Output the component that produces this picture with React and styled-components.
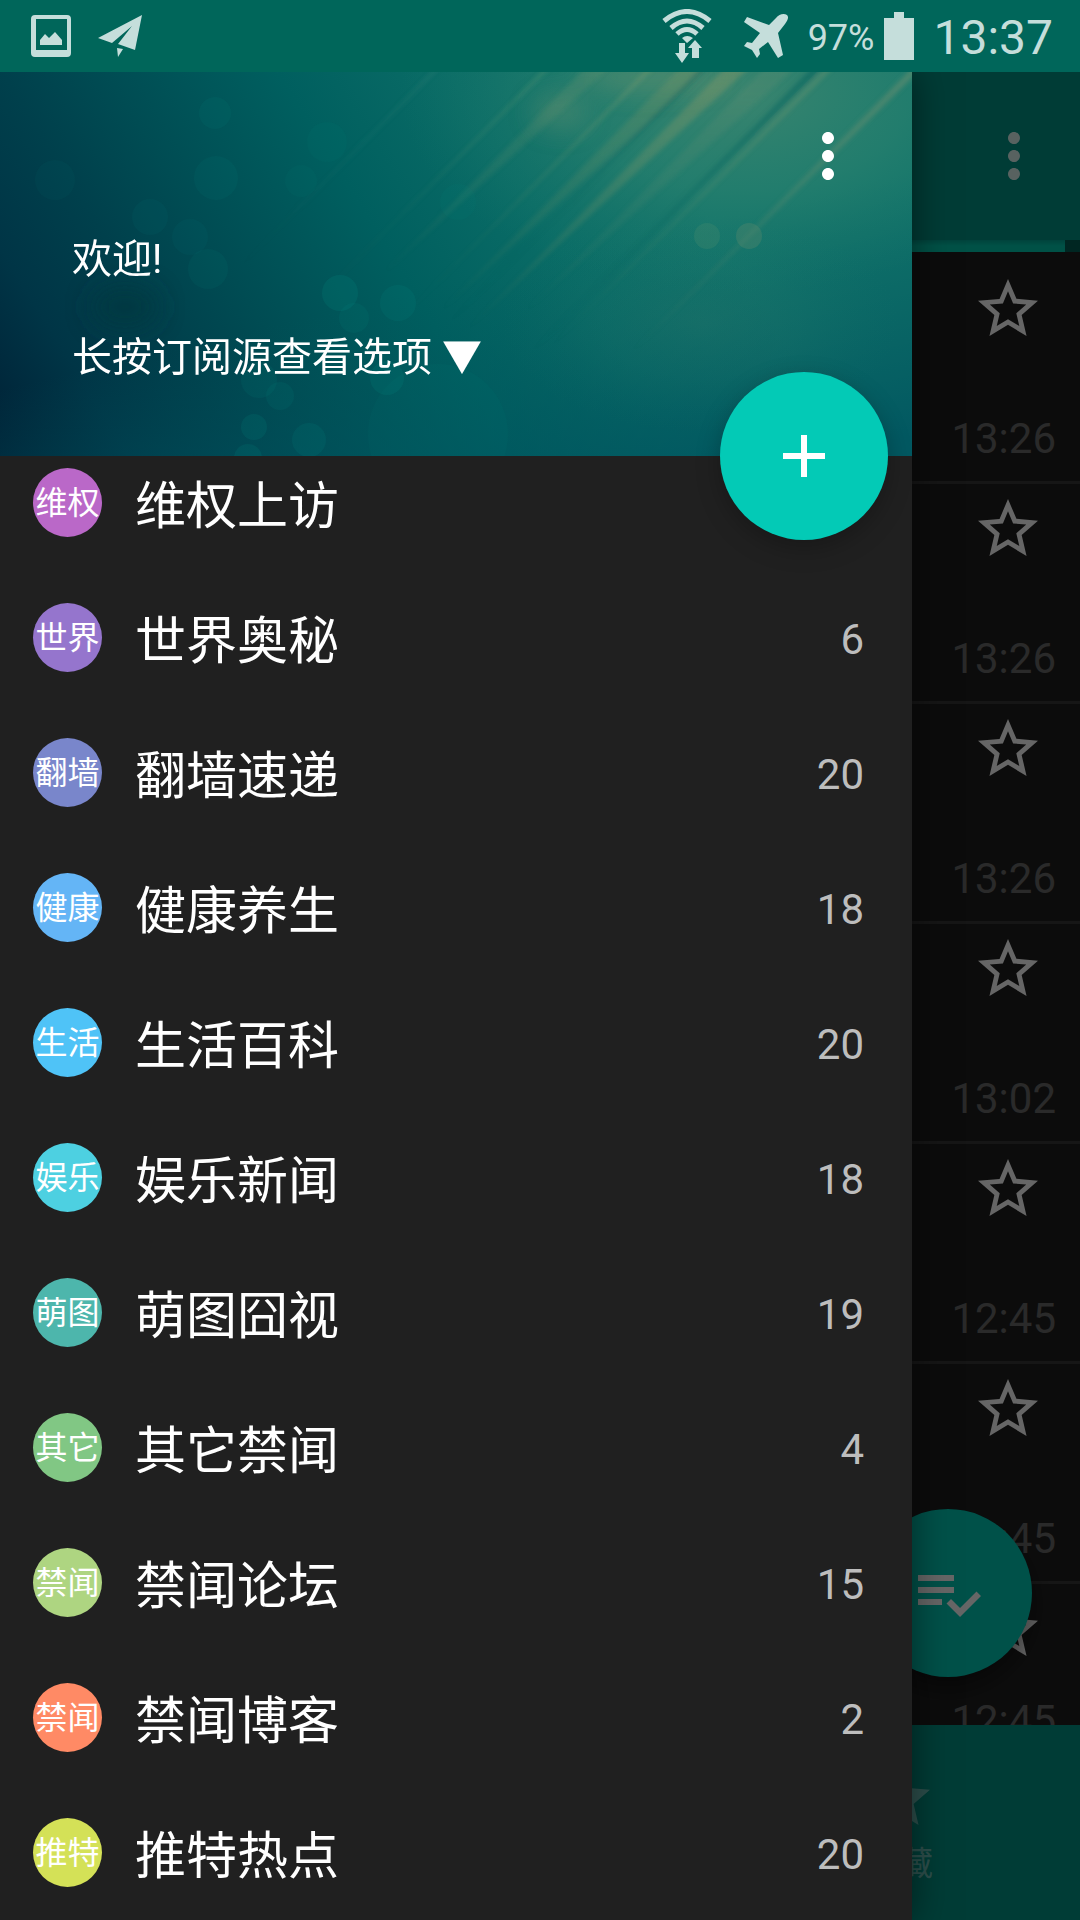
import React, { useState } from "react";
import styled, { createGlobalStyle } from "styled-components";

const feeds = [
  { short: "维权", name: "维权上访", color: "#ba68c8" },
  { short: "世界", name: "世界奥秘", count: 6, color: "#9575cd" },
  { short: "翻墙", name: "翻墙速递", count: 20, color: "#7986cb" },
  { short: "健康", name: "健康养生", count: 18, color: "#64b5f6" },
  { short: "生活", name: "生活百科", count: 20, color: "#4fc3f7" },
  { short: "娱乐", name: "娱乐新闻", count: 18, color: "#4dd0e1" },
  { short: "萌图", name: "萌图囧视", count: 19, color: "#4db6ac" },
  { short: "其它", name: "其它禁闻", count: 4, color: "#81c784" },
  { short: "禁闻", name: "禁闻论坛", count: 15, color: "#aed581" },
  { short: "禁闻", name: "禁闻博客", count: 2, color: "#ff8a65" },
  { short: "推特", name: "推特热点", count: 20, color: "#d4e157" },
];

const articles = [
  { id: 1, time: "13:26" },
  { id: 2, time: "13:26" },
  { id: 3, time: "13:26" },
  { id: 4, time: "13:02" },
  { id: 5, time: "12:45" },
  { id: 6, time: "12:45" },
  { id: 7, time: "12:45", compact: true },
];

const icons = {
  more: "M12 8c1.1 0 2-.9 2-2s-.9-2-2-2-2 .9-2 2 .9 2 2 2zm0 2c-1.1 0-2 .9-2 2s.9 2 2 2 2-.9 2-2-.9-2-2-2zm0 6c-1.1 0-2 .9-2 2s.9 2 2 2 2-.9 2-2-.9-2-2-2z",
  add: "M19 13h-6v6h-2v-6H5v-2h6V5h2v6h6v2z",
  star: "M12 17.27L18.18 21l-1.64-7.03L22 9.24l-7.19-.61L12 2 9.19 8.63 2 9.24l5.46 4.73L5.82 21z",
  starBorder:
    "M22 9.24l-7.19-.62L12 2 9.19 8.63 2 9.24l5.46 4.73L5.82 21 12 17.27 18.18 21l-1.63-7.03L22 9.24zM12 15.4l-3.76 2.27 1-4.28-3.32-2.88 4.38-.38L12 6.1l1.71 4.04 4.38.38-3.32 2.88 1 4.28L12 15.4z",
  markRead:
    "M14 10H2v2h12v-2zm0-4H2v2h12V6zM2 16h8v-2H2v2zm19.5-4.5L23 13l-6.99 7-4.51-4.5L13 14l3.01 3 5.49-5.5z",
};

const Icon = ({ name }) => (
  <StIcon viewBox="0 0 24 24" aria-hidden="true">
    <path d={icons[name]} />
  </StIcon>
);

const StatusBar = () => (
  <StStatusBar>
    <StStatusGroup $gap={27}>
      <svg width="40" height="42" viewBox="0 0 40 42">
        <path
          fillRule="evenodd"
          d="M4 0h32a4 4 0 0 1 4 4v34a4 4 0 0 1-4 4H4a4 4 0 0 1-4-4V4a4 4 0 0 1 4-4zM5 4v31h31V4zM9 30v-5l5-6 4 4 6-6 7 8v5z"
        />
      </svg>
      <svg width="45" height="42" viewBox="0 0 45 42">
        <path d="M0 23L44 0 14 28zM44 0L37 35 20 29 34 11 14 28 44 0zM19 33l6 1-5 8z" />
      </svg>
    </StStatusGroup>
    <StStatusGroup $gap={10}>
      <StWifi width="50" height="54" viewBox="0 0 50 54">
        <g fill="none" strokeWidth="5">
          <path d="M2 12Q25-7 48 12" />
          <path d="M9 19Q25 5 41 19" />
          <path d="M15 25Q25 16 35 25" />
        </g>
        <path d="M20 29Q25 25 31 29L25 34zM17 34h6v10h4l-7 10-7-10h4zM30 49V39h-4l7-8 7 8h-3v10z" />
      </StWifi>
      <StPlane width="44" height="44" viewBox="0 0 44 44">
        <path d="M43 1c-3-2-8-1-11 3l-7 7L3 3 0 8l16 11-8 10-5-1-3 4 8 4 5 8 3-4-1-5 9-7 10 16 5-3-5-22 7-9c3-4 4-7 2-9z" />
      </StPlane>
      <StBattery>97%</StBattery>
      <svg width="30" height="48" viewBox="0 0 30 48">
        <path d="M10 0h10v6h10v42H0V6h10z" />
      </svg>
      <StClock>13:37</StClock>
    </StStatusGroup>
  </StStatusBar>
);

const bokeh = [
  [215, 41, 16, 0.08],
  [216, 106, 22, 0.08],
  [150, 145, 18, 0.07],
  [55, 108, 20, 0.05],
  [190, 165, 18, 0.07],
  [208, 197, 20, 0.08],
  [327, 70, 20, 0.06],
  [301, 109, 16, 0.05],
  [340, 221, 18, 0.16],
  [354, 246, 15, 0.1],
  [398, 231, 18, 0.12],
  [259, 308, 18, 0.1],
  [280, 324, 14, 0.1],
  [387, 306, 17, 0.14],
  [254, 355, 13, 0.14],
  [309, 368, 17, 0.12],
  [248, 386, 14, 0.14],
  [438, 362, 70, 0.05],
  [458, 130, 18, 0.06],
];

// x at the top edge, length of the fall, thickness, colour
const rays = [
  [545, 230, 5, "#7fa878", 0.25],
  [585, 200, 24, "#6f9570", 0.25],
  [648, 260, 6, "#93a470", 0.28],
  [680, 240, 26, "#7f9568", 0.3],
  [725, 260, 24, "#8f9a68", 0.4],
  [765, 240, 30, "#5f9070", 0.3],
  [700, 260, 8, "#005f5c", 0.35],
  [812, 380, 10, "#00605c", 0.5],
  [826, 340, 7, "#7f9870", 0.35],
  [912, 400, 10, "#739272", 0.5],
  [435, 200, 5, "#4d9380", 0.2],
];

const HeaderArt = () => (
  <StArt viewBox="0 0 912 384" preserveAspectRatio="none" aria-hidden="true">
    <defs>
      <linearGradient id="sea" gradientUnits="userSpaceOnUse" x1="0" y1="384" x2="620" y2="0">
        <stop offset="0" stopColor="#002136" />
        <stop offset="0.15" stopColor="#003546" />
        <stop offset="0.28" stopColor="#00404c" />
        <stop offset="0.4" stopColor="#004c53" />
        <stop offset="0.6" stopColor="#005f5f" />
        <stop offset="0.8" stopColor="#0a6c66" />
        <stop offset="1" stopColor="#12746a" />
      </linearGradient>
      <radialGradient id="sun">
        <stop offset="0" stopColor="#559072" stopOpacity="0.6" />
        <stop offset="0.5" stopColor="#3a8a72" stopOpacity="0.4" />
        <stop offset="1" stopColor="#1d7c6d" stopOpacity="0" />
      </radialGradient>
      <linearGradient id="deep" gradientUnits="userSpaceOnUse" x1="700" y1="150" x2="760" y2="400">
        <stop offset="0" stopColor="#00585f" stopOpacity="0" />
        <stop offset="1" stopColor="#005560" stopOpacity="0.9" />
      </linearGradient>
      <linearGradient id="fade" x1="0" y1="0" x2="0" y2="1">
        <stop offset="0" stopColor="#fff" />
        <stop offset="1" stopColor="#000" />
      </linearGradient>
      <mask id="fall" maskUnits="userSpaceOnUse" x="0" y="0" width="912" height="384">
        <rect width="912" height="280" fill="url(#fade)" />
      </mask>
      <filter id="soft">
        <feGaussianBlur stdDeviation="2" />
      </filter>
      <filter id="softer" x="-50%" y="-50%" width="200%" height="200%">
        <feGaussianBlur stdDeviation="12" />
      </filter>
    </defs>
    <rect width="912" height="384" fill="url(#sea)" />
    <rect width="912" height="384" fill="url(#deep)" />
    <ellipse cx="740" cy="20" rx="340" ry="200" fill="url(#sun)" />
    <ellipse cx="700" cy="250" rx="200" ry="110" fill="url(#sun)" opacity="0.25" />
    <g filter="url(#softer)">
      <ellipse cx="560" cy="40" rx="28" ry="18" fill="#6b9070" opacity="0.35" />
      <ellipse cx="650" cy="5" rx="70" ry="14" fill="#7f9870" opacity="0.35" />
      <ellipse cx="125" cy="235" rx="34" ry="22" fill="#003640" opacity="0.7" />
    </g>
    <g mask="url(#fall)">
      <g filter="url(#soft)">
        {rays.map(([x, length, size, color, opacity]) => (
          <path
            key={x}
            d={`M${x} -4L${x + size} -4L${x - length} ${length}z`}
            fill={color}
            opacity={opacity}
          />
        ))}
      </g>
    </g>
    {bokeh.map(([cx, cy, r, opacity]) => (
      <circle key={`${cx}-${cy}`} cx={cx} cy={cy} r={r} fill="#009489" opacity={opacity} />
    ))}
    <circle cx="707" cy="164" r="13" fill="#4a8a6c" opacity="0.3" />
    <circle cx="749" cy="164" r="13" fill="#5c8a6c" opacity="0.35" />
  </StArt>
);

const Drawer = () => (
  <StDrawer>
    <StDrawerHeader>
      <HeaderArt />
      <StHeaderContent>
        <StHeaderMenu aria-label="更多">
          <Icon name="more" />
        </StHeaderMenu>
        <StHeaderText>欢迎!</StHeaderText>
        <StHeaderText>长按订阅源查看选项 ▼</StHeaderText>
      </StHeaderContent>
      <StAddButton aria-label="添加">
        <Icon name="add" />
      </StAddButton>
    </StDrawerHeader>
    <StFeedScroll>
      <StFeedList>
        {feeds.map((feed) => (
          <li key={feed.name}>
            <StFeed href="#">
              <StBadge $color={feed.color}>{feed.short}</StBadge>
              <StFeedName>{feed.name}</StFeedName>
              <StCount>{feed.count}</StCount>
            </StFeed>
          </li>
        ))}
      </StFeedList>
    </StFeedScroll>
  </StDrawer>
);

const Article = ({ time, compact }) => {
  const [starred, setStarred] = useState(false);
  return (
    <StArticle $compact={compact}>
      <StStar aria-label="收藏" aria-pressed={starred} onClick={() => setStarred(!starred)}>
        <Icon name={starred ? "star" : "starBorder"} />
      </StStar>
      <StTime>{time}</StTime>
    </StArticle>
  );
};

const App = () => {
  const progress = 986;
  return (
    <>
      <GlobalStyle />
      <StPage>
        <StatusBar />
        <StBody>
          <StMain>
            <StAppBar>
              <StIconButton aria-label="更多">
                <Icon name="more" />
              </StIconButton>
            </StAppBar>
            <StProgress>
              <StProgressFill style={{ width: `${progress / 10}%` }} />
            </StProgress>
            <StArticlePane>
              <StArticleList>
                {articles.map((article) => (
                  <Article key={article.id} time={article.time} compact={article.compact} />
                ))}
              </StArticleList>
              <StReadButton aria-label="全部已读">
                <Icon name="markRead" />
              </StReadButton>
            </StArticlePane>
            <StBottomNav>
              <StTab href="#">
                <Icon name="star" />
                收藏
              </StTab>
            </StBottomNav>
          </StMain>
          <StScrim />
          <Drawer />
        </StBody>
      </StPage>
    </>
  );
};

export default App;

const GlobalStyle = createGlobalStyle`
  * {
    box-sizing: border-box;
  }
  body {
    margin: 0;
    background-color: #202020;
    font-family: Roboto, "Noto Sans CJK SC", sans-serif;
  }
  button {
    border: none;
    padding: 0;
    background: none;
    color: inherit;
    font: inherit;
    cursor: pointer;
  }
  a {
    color: inherit;
    text-decoration: none;
  }
  ul {
    list-style: none;
    margin: 0;
    padding: 0;
  }
`;

const StPage = styled.div`
  display: flex;
  flex-direction: column;
  height: 100vh;
  overflow: hidden;
`;

const StIcon = styled.svg`
  display: block;
  width: 72px;
  height: 72px;
  fill: currentColor;
`;

const StStatusBar = styled.header`
  display: flex;
  justify-content: space-between;
  align-items: center;
  height: 72px;
  flex-shrink: 0;
  padding: 0 27px 0 31px;
  background-color: #00665a;
  color: #c5dedb;
  fill: #c5dedb;
`;

const StStatusGroup = styled.div`
  display: flex;
  align-items: center;
  gap: ${({ $gap }) => $gap}px;
`;

const StWifi = styled.svg`
  stroke: none;
  g {
    stroke: #c5dedb;
  }
`;

const StPlane = styled.svg`
  margin: 0 10px 0 22px;
`;

const StBattery = styled.span`
  padding-top: 4px;
  font-size: 36px;
  line-height: 44px;
`;

const StClock = styled.span`
  margin-left: 9px;
  padding-top: 4px;
  font-size: 48px;
  line-height: 56px;
`;

/* main screen, scrim and drawer share one cell */
const StBody = styled.div`
  display: grid;
  grid-template-columns: minmax(0, 1fr);
  grid-template-rows: minmax(0, 1fr);
  flex: 1;
  min-height: 0;
  > * {
    grid-area: 1 / 1;
  }
`;

const StMain = styled.main`
  display: flex;
  flex-direction: column;
  background-color: #202020;
  color: white;
`;

const StScrim = styled.div`
  z-index: 1;
  background-color: rgba(0, 0, 0, 0.6);
`;

const StAppBar = styled.div`
  display: flex;
  justify-content: flex-end;
  align-items: center;
  height: 168px;
  flex-shrink: 0;
  padding-right: 30px;
  background-color: #009688;
`;

const StIconButton = styled.button`
  color: #dcf4f1;
`;

const StProgress = styled.div`
  height: 12px;
  flex-shrink: 0;
  background-color: #005f55;
`;

const StProgressFill = styled.div`
  height: 100%;
  background: linear-gradient(#00a896, #00cbb0 50%);
`;

const StArticlePane = styled.div`
  position: relative;
  flex: 1;
  min-height: 0;
  overflow: hidden;
`;

const StArticleList = styled.ul`
  padding-top: 12px;
`;

const StArticle = styled.li`
  display: flex;
  flex-direction: column;
  justify-content: space-between;
  align-items: flex-end;
  height: ${({ $compact }) => ($compact ? 182 : 220)}px;
  padding: 9px 24px 18px 0;
  border-bottom: 3px solid #383838;
`;

const StStar = styled.button`
  margin-right: 12px;
`;

const StTime = styled.time`
  font-size: 42px;
  line-height: 48px;
  color: #696969;
`;

const StReadButton = styled.button`
  position: absolute;
  right: 48px;
  bottom: 48px;
  display: flex;
  justify-content: center;
  align-items: center;
  width: 168px;
  height: 168px;
  border-radius: 50%;
  background-color: #00cab6;
  box-shadow: 0 12px 24px rgba(0, 0, 0, 0.4);
`;

const StBottomNav = styled.nav`
  display: flex;
  justify-content: flex-end;
  height: 195px;
  flex-shrink: 0;
  background-color: #009688;
`;

const StTab = styled.a`
  display: flex;
  flex-direction: column;
  justify-content: center;
  align-items: center;
  gap: 8px;
  width: 33.33%;
  padding-top: 2px;
  font-size: 33px;
  line-height: 44px;
  color: #72c6bd;
`;

const StDrawer = styled.aside`
  z-index: 2;
  display: flex;
  flex-direction: column;
  width: calc(100% - 168px);
  min-height: 0;
  background-color: #202020;
  box-shadow: 0 0 36px rgba(0, 0, 0, 0.5);
  clip-path: inset(0 -60px 0 0);
  color: white;
`;

const StDrawerHeader = styled.div`
  position: relative;
  z-index: 1;
  display: grid;
  grid-template-rows: 384px;
  flex-shrink: 0;
  background-color: #00565c;
`;

const StArt = styled.svg`
  grid-area: 1 / 1;
  display: block;
  width: 100%;
  height: 384px;
`;

const StHeaderContent = styled.div`
  z-index: 1;
  grid-area: 1 / 1;
  display: flex;
  flex-direction: column;
  gap: 38px;
  padding: 48px 48px 0 72px;
`;

const StHeaderMenu = styled.button`
  align-self: flex-end;
`;

const StHeaderText = styled.div`
  font-size: 40px;
  line-height: 60px;
`;

const StAddButton = styled.button`
  position: absolute;
  z-index: 2;
  right: 24px;
  bottom: -84px;
  display: flex;
  justify-content: center;
  align-items: center;
  width: 168px;
  height: 168px;
  border-radius: 50%;
  background-color: #03cab6;
  box-shadow: 0 8px 24px rgba(0, 0, 0, 0.25);
`;

const StFeedScroll = styled.div`
  flex: 1;
  min-height: 0;
  overflow: hidden;
`;

const StFeedList = styled.ul`
  margin-top: -21px;
`;

const StFeed = styled.a`
  display: flex;
  align-items: center;
  height: 135px;
  padding: 0 48px 0 33px;
`;

const StBadge = styled.span`
  display: flex;
  justify-content: center;
  align-items: center;
  width: 69px;
  height: 69px;
  flex-shrink: 0;
  border-radius: 50%;
  background-color: ${({ $color }) => $color};
  font-size: 32px;
  line-height: 48px;
  white-space: nowrap;
`;

const StFeedName = styled.span`
  flex: 1;
  margin-left: 33px;
  padding-top: 8px;
  font-size: 51px;
  line-height: 72px;
`;

const StCount = styled.span`
  padding-top: 4px;
  font-size: 42px;
  line-height: 48px;
  color: #bdbdbd;
`;
